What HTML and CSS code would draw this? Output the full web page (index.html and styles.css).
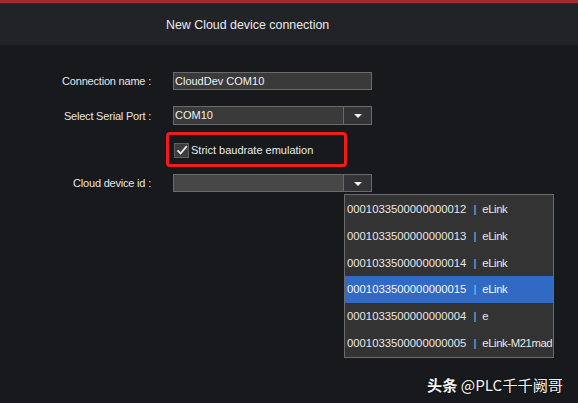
FILE: index.html
```html
<!DOCTYPE html>
<html>
<head>
<meta charset="utf-8">
<link rel="stylesheet" href="styles.css">
</head>
<body>
<div class="app">
  <div class="topline"></div>
  <div class="titlebar"><span class="title">New Cloud device connection</span></div>
  <div class="form">
    <div class="row r1">
      <div class="label">Connection name :</div>
      <div class="input">CloudDev COM10</div>
    </div>
    <div class="row r2">
      <div class="label">Select Serial Port :</div>
      <div class="combo">
        <div class="field">COM10</div>
        <div class="btn"><span class="arrow"></span></div>
      </div>
    </div>
    <div class="row r3">
      <div class="label"></div>
      <div class="mark">
        <span class="check"><svg width="12" height="12" viewBox="0 0 12 12"><path d="M1.5 6.3 L4.6 9.4 L10.8 2.2" fill="none" stroke="#e6e6e6" stroke-width="1.8"/></svg></span>
        <span class="cbtext">Strict baudrate emulation</span>
      </div>
    </div>
    <div class="row r4">
      <div class="label">Cloud device id :</div>
      <div class="combo">
        <div class="field empty"></div>
        <div class="btn"><span class="arrow"></span></div>
      </div>
    </div>
  </div>
  <div class="list">
    <div class="item"><span class="id">0001033500000000012</span><span class="sep">|</span><span class="name">eLink</span></div>
    <div class="item"><span class="id">0001033500000000013</span><span class="sep">|</span><span class="name">eLink</span></div>
    <div class="item"><span class="id">0001033500000000014</span><span class="sep">|</span><span class="name">eLink</span></div>
    <div class="item sel"><span class="id">0001033500000000015</span><span class="sep">|</span><span class="name">eLink</span></div>
    <div class="item"><span class="id">0001033500000000004</span><span class="sep">|</span><span class="name">e</span></div>
    <div class="item"><span class="id">0001033500000000005</span><span class="sep">|</span><span class="name">eLink-M21mad</span></div>
  </div>
  <div class="watermark"><b>头条</b> @PLC千千阙哥</div>
</div>
</body>
</html>
```
FILE: styles.css
```css
* { box-sizing: border-box; }
html, body { margin: 0; padding: 0; }
body {
  width: 578px;
  height: 403px;
  overflow: hidden;
  background: #18191c;
  font-family: "Liberation Sans", Arial, sans-serif;
  color: #e4e4e4;
}
.app { position: relative; width: 578px; height: 403px; }
.topline {
  height: 4px;
  background: #a8292b;
  border-bottom: 1px solid #2d2e32;
}
.titlebar {
  height: 41px;
  background: #222327;
  display: flex;
  align-items: center;
  padding-left: 166px;
}
.title { font-size: 12.4px; color: #e8eaee; }
.form {
  display: flex;
  flex-direction: column;
  padding-top: 27px;
}
.row {
  display: flex;
  align-items: center;
  gap: 22px;
}
.label {
  width: 151px;
  text-align: right;
  font-size: 11px;
  letter-spacing: -0.2px;
  color: #e6e6e6;
}
.r1 { height: 18px; }
.r2 { height: 19px; margin-top: 16px; }
.r3 { height: 35px; margin-top: 7px; }
.r4 { height: 18px; margin-top: 7px; }
.input {
  width: 199px;
  height: 18px;
  background: #3a3a3a;
  border: 1px solid #6a6a6a;
  font-size: 11px;
  padding-left: 1px;
  line-height: 16px;
  color: #f0f0f0;
}
.combo {
  width: 199px;
  height: 100%;
  display: flex;
  border: 1px solid #6a6a6a;
}
.field {
  width: 170px;
  background: #3a3a3a;
  border-right: 1px solid #6a6a6a;
  font-size: 11px;
  padding-left: 1px;
  line-height: 17px;
  color: #f0f0f0;
}
.field.empty { background: #474747; }
.btn {
  flex: 1;
  background: #333335;
  display: flex;
  align-items: center;
  justify-content: center;
}
.arrow {
  width: 0; height: 0;
  border-left: 4px solid transparent;
  border-right: 4px solid transparent;
  border-top: 4px solid #f2f2f2;
  margin-top: 1px;
}
.mark {
  margin-left: -7px;
  width: 181px;
  height: 35px;
  border: 3px solid #f01c1c;
  border-radius: 4px;
  display: flex;
  align-items: center;
  padding-left: 5px;
  padding-top: 1px;
}
.check {
  width: 15px; height: 15px;
  background: #3c3c3e;
  border: 1px solid #5e5e5e;
  display: flex;
  align-items: center;
  justify-content: center;
}
.cbtext { margin-left: 2px; font-size: 11px; color: #e8eaf0; }
.list {
  position: absolute;
  left: 344px;
  top: 194px;
  width: 210px;
  height: 164px;
  background: #333333;
  border: 1px solid #6a6a6a;
  padding-top: 1px;
}
.item {
  height: 26.7px;
  display: flex;
  align-items: center;
  padding-left: 2px;
  font-size: 11.3px;
  color: #e8e8e8;
  white-space: nowrap;
}
.item.sel { background: #316ac5; color: #f4f6fa; }
.sep { color: #9cc0e8; margin: 0 6px 0 7px; }
.name { letter-spacing: -0.4px; }
.watermark {
  position: absolute;
  left: 427px;
  top: 373px;
  font-size: 15.2px;
  color: #f4f4f4;
  text-shadow: 0 0 2px rgba(0,0,0,0.9);
  font-family: "Noto Sans CJK SC", "Noto Sans", sans-serif;
  white-space: nowrap;
}
.watermark b { font-weight: 700; }
```
